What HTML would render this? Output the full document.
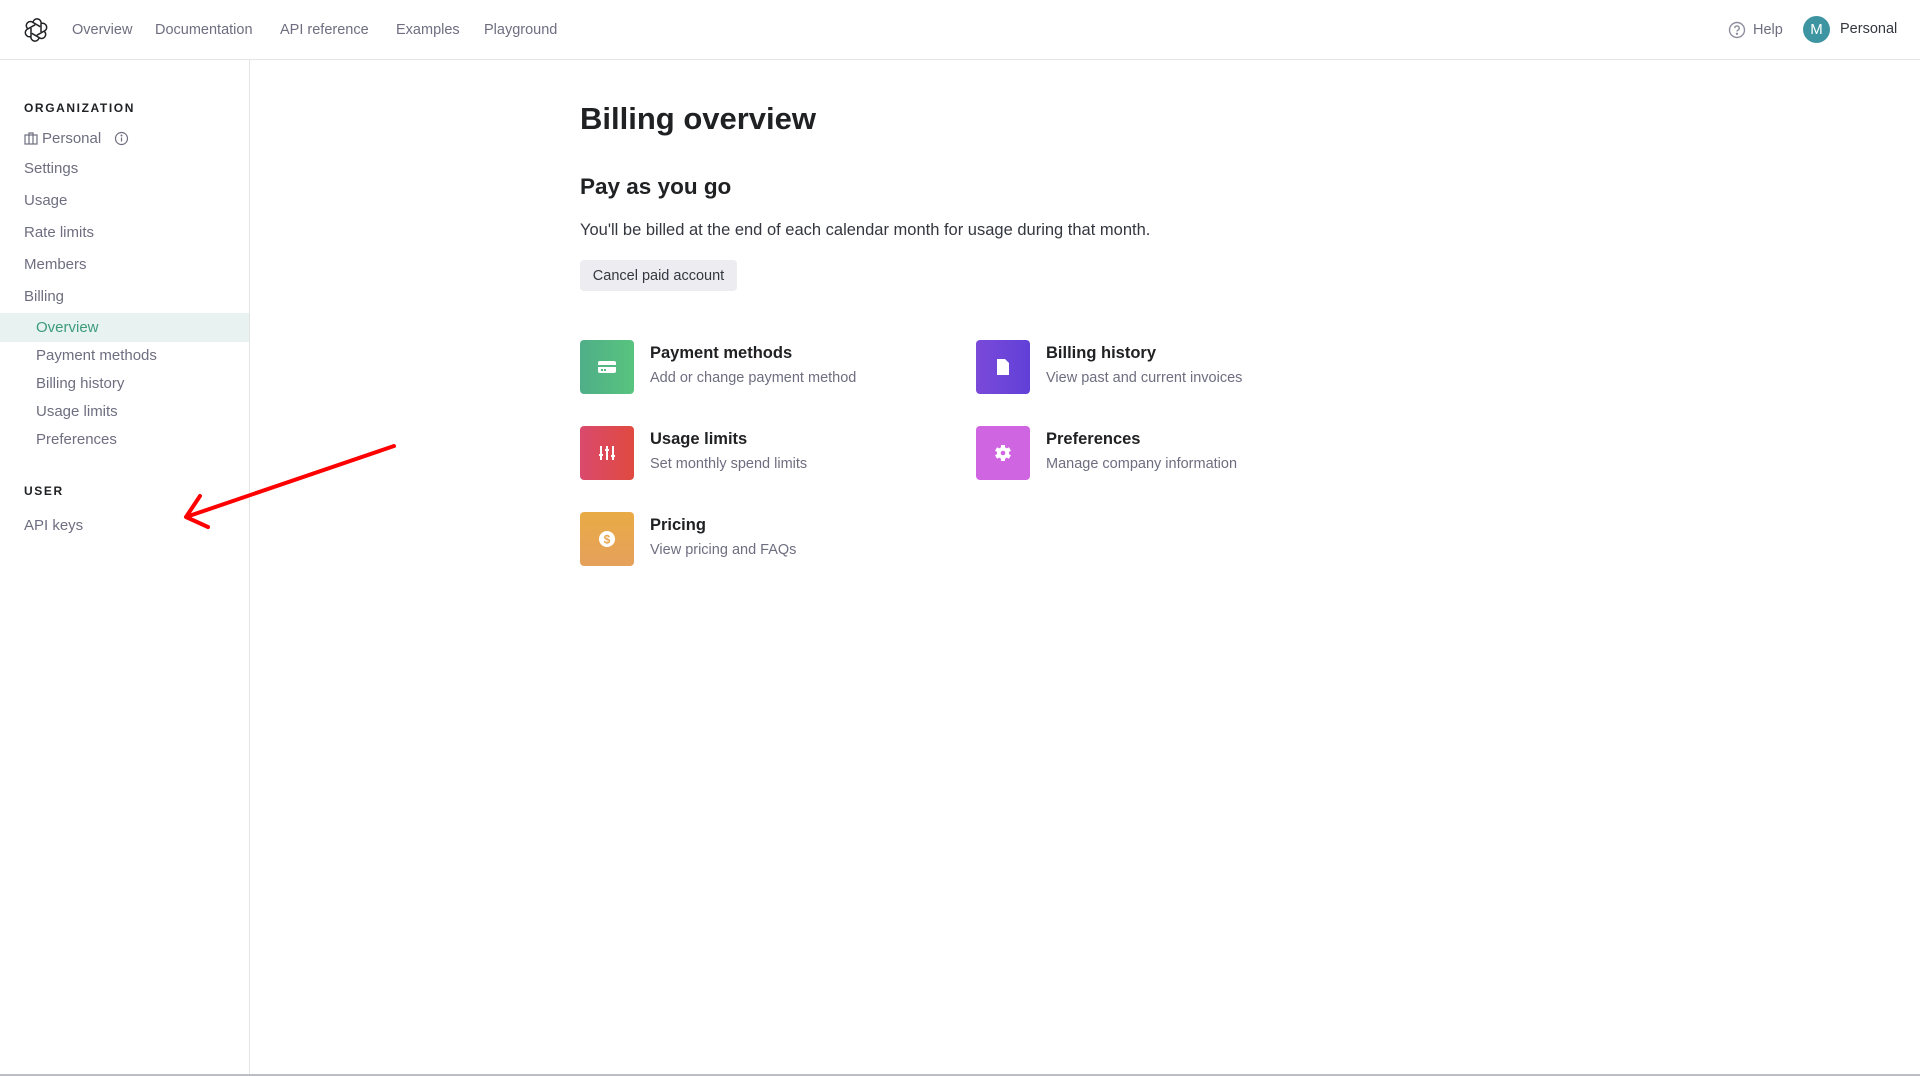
<!DOCTYPE html>
<html><head><meta charset="utf-8"><style>
*{margin:0;padding:0;box-sizing:border-box}
body{width:1920px;height:1076px;background:#fff;font-family:"Liberation Sans",sans-serif;position:relative;overflow:hidden;color:#202123}
.a{position:absolute;white-space:nowrap}
.nav{font-size:14.5px;color:#6e6e80;top:22px}
.side{font-size:15px;color:#6e6e80;left:24px}
.sub{left:36px}
.cap{font-size:12px;font-weight:bold;letter-spacing:1.6px;color:#202123;left:24px}
.ic{position:absolute;width:54px;height:54px;border-radius:4px;display:flex;align-items:center;justify-content:center}
.t{font-size:16.5px;font-weight:bold;color:#202123}
.d{font-size:14.5px;color:#6e6e80}
</style></head><body>
<div class="a" style="left:0;top:59px;width:1920px;height:1px;background:#e5e5e5"></div>
<div class="a" style="left:249px;top:60px;width:1px;height:1016px;background:#e5e5e5"></div>
<div class="a" style="left:0;top:1074px;width:1920px;height:2px;background:#bdbdc4"></div>

<svg class="a" style="left:24px;top:18px" width="24" height="24" viewBox="0 0 24 24" fill="none" stroke="#202123" stroke-width="1.5">
<g transform="translate(12 12)">
<path d="M-3,-8 A4,4 0 0 1 5,-6 L5,2"/>
<g transform="rotate(60)"><path d="M-3,-8 A4,4 0 0 1 5,-6 L5,2"/></g>
<g transform="rotate(120)"><path d="M-3,-8 A4,4 0 0 1 5,-6 L5,2"/></g>
<g transform="rotate(180)"><path d="M-3,-8 A4,4 0 0 1 5,-6 L5,2"/></g>
<g transform="rotate(240)"><path d="M-3,-8 A4,4 0 0 1 5,-6 L5,2"/></g>
<g transform="rotate(300)"><path d="M-3,-8 A4,4 0 0 1 5,-6 L5,2"/></g>
</g></svg>
<div class="a nav" style="left:72px">Overview</div>
<div class="a nav" style="left:155px">Documentation</div>
<div class="a nav" style="left:280px">API reference</div>
<div class="a nav" style="left:396px">Examples</div>
<div class="a nav" style="left:484px">Playground</div>

<svg class="a" style="left:1728px;top:21px" width="18" height="18" viewBox="0 0 18 18" fill="none" stroke="#8e8ea0" stroke-width="1.4"><circle cx="9" cy="9" r="7.5"/><path d="M6.8,7.2a2.2,2.2 0 1 1 3,2c-.6.3-.8.7-.8 1.3"/><circle cx="9" cy="12.8" r=".5" fill="#8e8ea0"/></svg>
<div class="a nav" style="left:1753px">Help</div>
<div class="a" style="left:1803px;top:16px;width:27px;height:27px;border-radius:50%;background:#3e95a2;color:#fff;font-size:15px;text-align:center;line-height:27px">M</div>
<div class="a" style="left:1840px;top:21px;font-size:14.5px;color:#353740">Personal</div>

<div class="a cap" style="top:101px">ORGANIZATION</div>
<svg class="a" style="left:24px;top:132px" width="14" height="13" viewBox="0 0 14 13" fill="none" stroke="#6e6e80" stroke-width="1.2"><rect x="1" y="3" width="12" height="9"/><path d="M5,3V1h4v2M5,3v9M9,3v9"/></svg>
<div class="a side" style="left:42px;top:130px">Personal</div>
<svg class="a" style="left:114px;top:131px" width="15" height="15" viewBox="0 0 15 15" fill="none" stroke="#6e6e80" stroke-width="1.2"><circle cx="7.5" cy="7.5" r="6"/><path d="M7.5,6.5v4"/><circle cx="7.5" cy="4.5" r=".4" fill="#6e6e80"/></svg>
<div class="a side" style="top:160px">Settings</div>
<div class="a side" style="top:192px">Usage</div>
<div class="a side" style="top:224px">Rate limits</div>
<div class="a side" style="top:256px">Members</div>
<div class="a side" style="top:288px">Billing</div>
<div class="a" style="left:0;top:313px;width:249px;height:29px;background:#e8f3f1"></div>
<div class="a side sub" style="top:319px;color:#3d9b7a">Overview</div>
<div class="a side sub" style="top:347px">Payment methods</div>
<div class="a side sub" style="top:375px">Billing history</div>
<div class="a side sub" style="top:403px">Usage limits</div>
<div class="a side sub" style="top:431px">Preferences</div>
<div class="a cap" style="top:484px">USER</div>
<div class="a side" style="top:517px">API keys</div>

<svg class="a" style="left:0;top:0" width="420" height="560" fill="none" stroke="#f00" stroke-width="4" stroke-linecap="round"><path d="M394,446L186,517M186,517L200,496M186,517L208,527"/></svg>

<div class="a" style="left:580px;top:101px;font-size:31px;font-weight:bold">Billing overview</div>
<div class="a" style="left:580px;top:174px;font-size:22.5px;font-weight:bold">Pay as you go</div>
<div class="a" style="left:580px;top:221px;font-size:16.5px;color:#353740">You'll be billed at the end of each calendar month for usage during that month.</div>
<div class="a" style="left:580px;top:260px;width:157px;height:31px;background:#ececf1;border-radius:4px;font-size:14.5px;color:#353740;text-align:center;line-height:32px">Cancel paid account</div>

<div class="ic" style="left:580px;top:340px;background:linear-gradient(90deg,#4fae88,#58c47e)"><svg width="20" height="16" viewBox="0 0 20 16"><rect x="1" y="2" width="18" height="12" rx="2" fill="#fff"/><rect x="1" y="6" width="18" height="2" fill="#55b984"/><rect x="4" y="10" width="2" height="2" fill="#55b984"/><rect x="7" y="10" width="2" height="2" fill="#55b984"/></svg></div>
<div class="a t" style="left:650px;top:344px">Payment methods</div>
<div class="a d" style="left:650px;top:370px">Add or change payment method</div>

<div class="ic" style="left:976px;top:340px;background:linear-gradient(90deg,#7a4ad9,#6140d8)"><svg width="14" height="18" viewBox="0 0 14 18"><path d="M1,1h8l4,4v12H1z" fill="#fff"/></svg></div>
<div class="a t" style="left:1046px;top:344px">Billing history</div>
<div class="a d" style="left:1046px;top:370px">View past and current invoices</div>

<div class="ic" style="left:580px;top:426px;background:linear-gradient(90deg,#d94a6d,#e04a40)"><svg width="20" height="20" viewBox="0 0 20 20" stroke="#fff" stroke-width="2" fill="#fff"><path d="M4,3v14M10,3v14M16,3v14"/><rect x="2" y="11" width="4" height="2" stroke="none"/><rect x="8" y="6" width="4" height="2" stroke="none"/><rect x="14" y="12" width="4" height="2" stroke="none"/></svg></div>
<div class="a t" style="left:650px;top:430px">Usage limits</div>
<div class="a d" style="left:650px;top:456px">Set monthly spend limits</div>

<div class="ic" style="left:976px;top:426px;background:#d065e2"><svg width="20" height="20" viewBox="0 0 20 20"><g transform="translate(10 10)" fill="#fff"><circle r="6"/><rect x="-2" y="-8" width="4" height="16"/><rect x="-2" y="-8" width="4" height="16" transform="rotate(60)"/><rect x="-2" y="-8" width="4" height="16" transform="rotate(120)"/><circle r="2.3" fill="#d065e2"/></g></svg></div>
<div class="a t" style="left:1046px;top:430px">Preferences</div>
<div class="a d" style="left:1046px;top:456px">Manage company information</div>

<div class="ic" style="left:580px;top:512px;background:linear-gradient(180deg,#e9ab45,#e5a05b)"><svg width="20" height="20" viewBox="0 0 20 20"><circle cx="10" cy="10" r="8" fill="#fff"/><text x="10" y="14.5" text-anchor="middle" font-family="Liberation Sans" font-weight="bold" font-size="12" fill="#e7a650">$</text></svg></div>
<div class="a t" style="left:650px;top:516px">Pricing</div>
<div class="a d" style="left:650px;top:542px">View pricing and FAQs</div>
</body></html>
